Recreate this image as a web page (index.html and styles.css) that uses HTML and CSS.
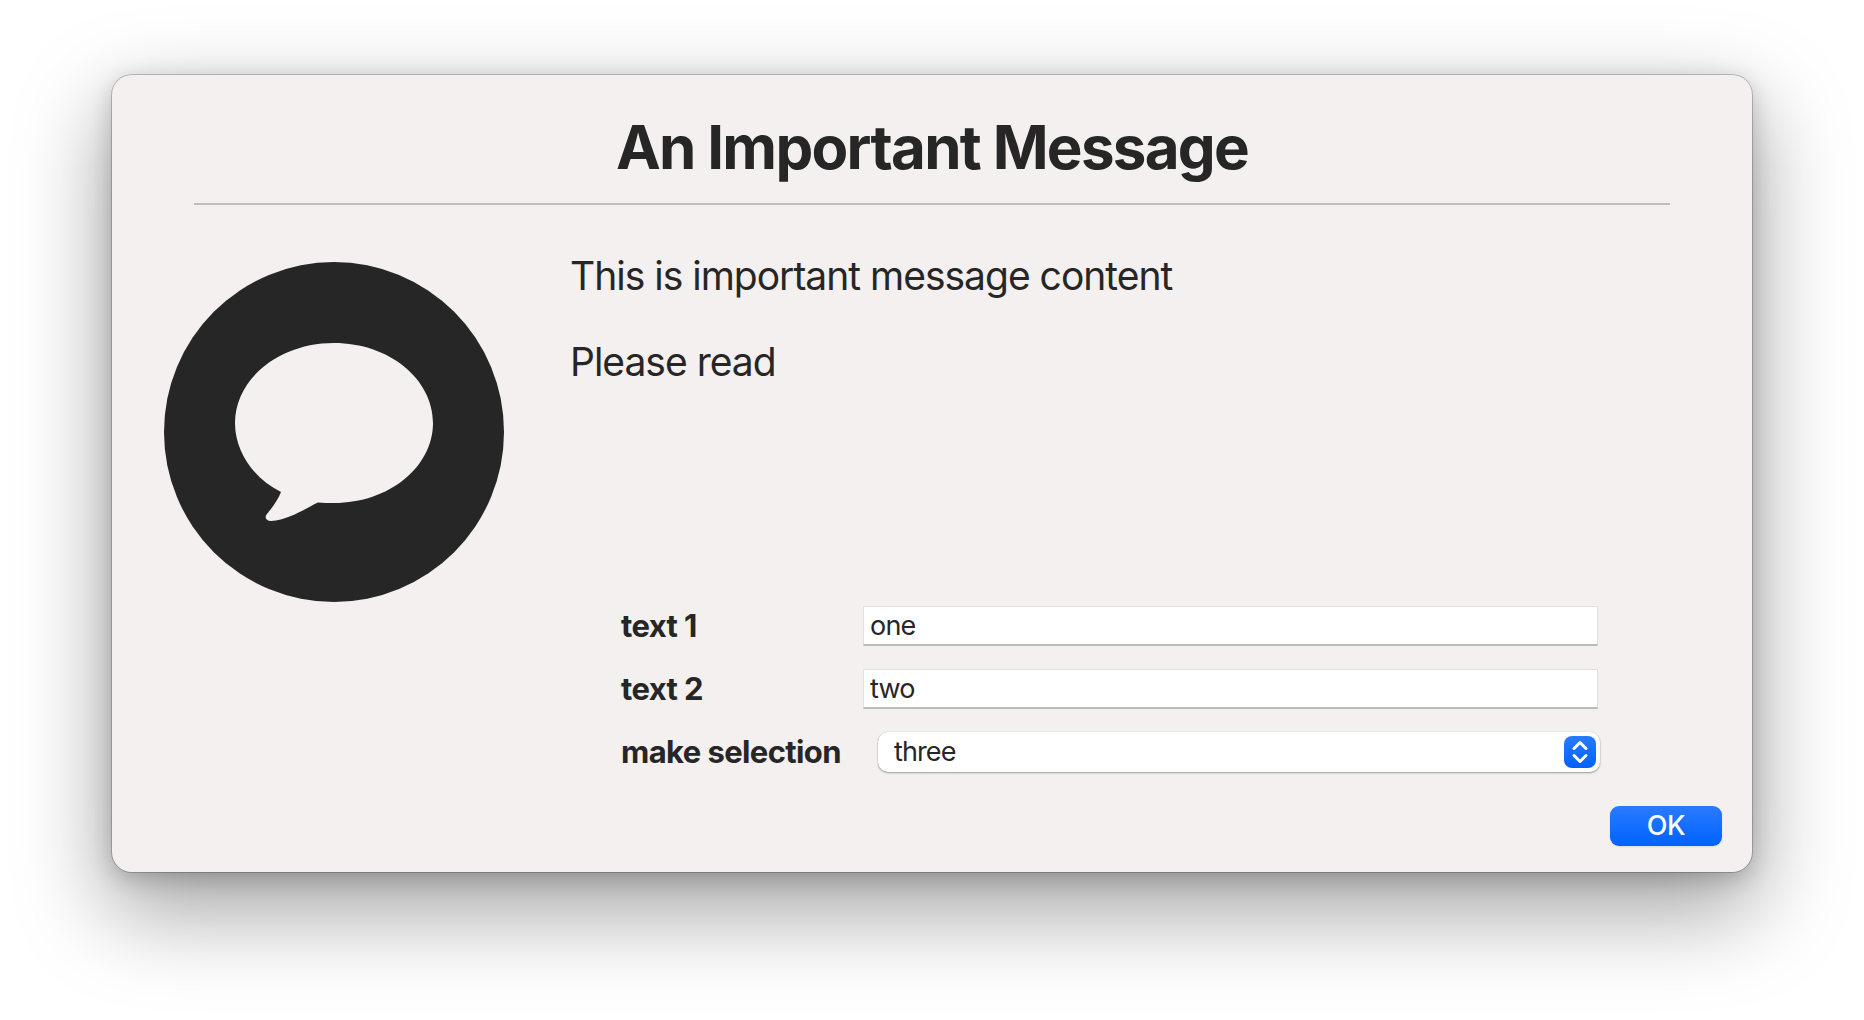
FILE: index.html
```html
<!DOCTYPE html>
<html lang="en">
<head>
    <meta charset="UTF-8">
    <title>An Important Message</title>
    <link rel="stylesheet" href="styles.css">
</head>
<body>
    <div class="dialog">
        <h1 class="title">An Important Message</h1>
        <div class="dialog-body">
            <svg class="message-icon" viewBox="0 0 340 340">
                <circle cx="170" cy="170" r="170" fill="#262626"/>
                <path fill="#f3f0ef" d="M170 81C225 81 269 117 269 161C269 205 225 241 170 241C164 241 159 241 154 240.5C142 246 125 258 107 259C102 259 100 255 103 252C108 246 114 238 117 230C91 217 71 191 71 161C71 117 115 81 170 81Z"/>
            </svg>
            <div class="content">
                <div class="message">
                    <p>This is important message content</p>
                    <p>Please read</p>
                </div>
                <form class="fields">
                    <label for="text1">text 1</label>
                    <input type="text" id="text1" value="one">
                    <label for="text2">text 2</label>
                    <input type="text" id="text2" value="two">
                    <label for="choice">make selection</label>
                    <div class="select-wrap">
                        <select id="choice">
                            <option>three</option>
                        </select>
                        <span class="select-arrows">
                            <svg viewBox="0 0 32 32" width="32" height="32" fill="none" stroke="#fff" stroke-width="3" stroke-linecap="round" stroke-linejoin="round">
                                <path d="M10 12.5L16 6.5L22 12.5"/>
                                <path d="M10 19.5L16 25.5L22 19.5"/>
                            </svg>
                        </span>
                    </div>
                </form>
            </div>
        </div>
        <div class="actions">
            <button type="button" class="ok-btn">OK</button>
        </div>
    </div>
</body>
</html>
```

FILE: styles.css
```css
html, body {
    height: 100%;
}
body {
    margin: 0;
    background-color: #fff;
    font-family: Inter, "Liberation Sans", sans-serif;
    color: #262626;
    overflow: hidden;
    padding: 75px 112px 0;
    box-sizing: border-box;
}
.dialog {
    box-sizing: border-box;
    width: 1640px;
    height: 797px;
    background: #f3f0ef;
    border-radius: 20px;
    box-shadow: 0 0 0 1px rgba(0,0,0,0.2), 0 6px 24px rgba(0,0,0,0.2), 0 35px 90px 5px rgba(0,0,0,0.36);
    display: flex;
    flex-direction: column;
}
.title {
    margin: 0 82px;
    height: 130px;
    line-height: 145px;
    box-sizing: border-box;
    border-bottom: 2px solid #bfbcbd;
    text-align: center;
    font-size: 60px;
    font-weight: 700;
    letter-spacing: -1.7px;
}
.dialog-body {
    display: flex;
    padding: 57px 0 0 52px;
}
.message-icon {
    width: 340px;
    height: 340px;
    flex: none;
}
.content {
    margin: -8px 0 0 66px;
}
.message {
    height: 352px;
    font-size: 39px;
    line-height: 44px;
    letter-spacing: -1px;
}
.message p {
    margin: 0 0 42px;
}
.fields {
    display: grid;
    grid-template-columns: 242px 737px;
    row-gap: 23px;
    margin-left: 51px;
    align-items: center;
}
.fields label {
    font-size: 31px;
    font-weight: 700;
    letter-spacing: -0.6px;
    padding-bottom: 2px;
}
.fields input {
    box-sizing: border-box;
    width: 735px;
    height: 40px;
    padding: 0 6px;
    background: #fff;
    border: 1px solid #e2dfde;
    border-bottom: 2px solid #bdbbba;
    border-radius: 0;
    outline: none;
    font: 27px Inter, "Liberation Sans", sans-serif;
    letter-spacing: -0.8px;
    color: #262626;
}
.select-wrap {
    position: relative;
    width: 722px;
    margin-left: 15px;
    height: 40px;
}
.select-wrap select {
    appearance: none;
    box-sizing: border-box;
    width: 100%;
    height: 40px;
    padding: 0 0 2px 16px;
    background: #fff;
    border: none;
    border-radius: 10px;
    box-shadow: 0 1px 2px rgba(0,0,0,0.35), 0 0 1px rgba(0,0,0,0.2);
    outline: none;
    font: 27px Inter, "Liberation Sans", sans-serif;
    letter-spacing: -0.9px;
    color: #262626;
}
.select-arrows {
    position: absolute;
    top: 4px;
    right: 4px;
    width: 32px;
    height: 32px;
    border-radius: 8px;
    background: linear-gradient(#2a7bff, #0062ff);
}
.select-arrows svg {
    display: block;
}
.actions {
    display: flex;
    justify-content: flex-end;
    padding: 34px 30px 0 0;
}
.ok-btn {
    width: 112px;
    height: 40px;
    padding: 0 0 2px;
    background: linear-gradient(#2a7bff, #0062ff);
    color: #fff;
    border: none;
    border-radius: 9px;
    box-shadow: 0 1px 2px rgba(0,0,0,0.1);
    font: 500 27px Inter, "Liberation Sans", sans-serif;
    letter-spacing: -0.5px;
    cursor: pointer;
}
```
